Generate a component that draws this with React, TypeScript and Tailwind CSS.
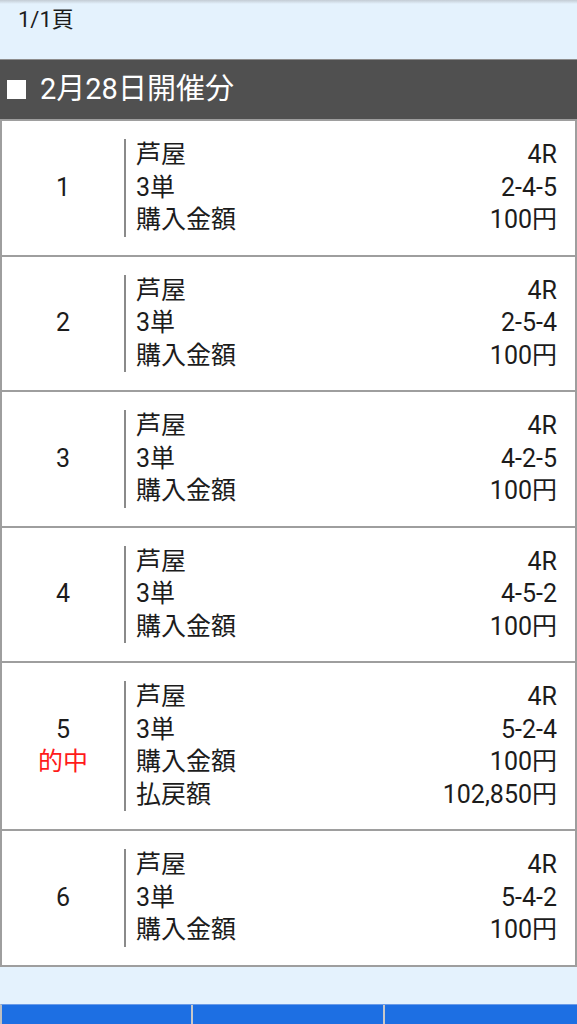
import React from "react";

type Bet = {
  no: number;
  place: string;
  race: string;
  kind: string;
  combo: string;
  amount: string;
  hit?: boolean;
  payout?: string;
};

const bets: Bet[] = [
  { no: 1, place: "芦屋", race: "4R", kind: "3単", combo: "2-4-5", amount: "100円" },
  { no: 2, place: "芦屋", race: "4R", kind: "3単", combo: "2-5-4", amount: "100円" },
  { no: 3, place: "芦屋", race: "4R", kind: "3単", combo: "4-2-5", amount: "100円" },
  { no: 4, place: "芦屋", race: "4R", kind: "3単", combo: "4-5-2", amount: "100円" },
  { no: 5, place: "芦屋", race: "4R", kind: "3単", combo: "5-2-4", amount: "100円", hit: true, payout: "102,850円" },
  { no: 6, place: "芦屋", race: "4R", kind: "3単", combo: "5-4-2", amount: "100円" },
];

function Row({ label, value }: { label: string; value: string }) {
  return (
    <div className="flex justify-between">
      <span>{label}</span>
      <span>{value}</span>
    </div>
  );
}

function BetCard({ bet }: { bet: Bet }) {
  return (
    <div className="flex items-stretch bg-white border-x-2 border-b-2 border-[#9e9e9e] py-[18px]">
      <div className="w-[122px] flex flex-col items-center justify-center leading-[32.5px]">
        <span>{bet.no}</span>
        {bet.hit && <span className="text-[#ff1a1a]">的中</span>}
      </div>
      <div className="flex-1 border-l-2 border-[#8a8a8a] pl-[10px] pr-[18px] leading-[32.5px]">
        <Row label={bet.place} value={bet.race} />
        <Row label={bet.kind} value={bet.combo} />
        <Row label="購入金額" value={bet.amount} />
        {bet.payout && <Row label="払戻額" value={bet.payout} />}
      </div>
    </div>
  );
}

export default function App() {
  return (
    <div
      className="h-[1024px] w-[577px] overflow-hidden bg-[#e4f2fd] text-[#1c1c1c]"
      style={{ fontFamily: "Roboto, 'Noto Sans CJK JP', sans-serif" }}
    >
      <div className="relative h-[59px] pl-[18px] pt-[6px] text-[22px] leading-[28px]">
        <div className="absolute inset-x-0 top-0 h-[4px] bg-gradient-to-b from-[#c3ccd4] to-transparent" />
        1/1頁
      </div>
      <div className="h-[62px] border-t border-[#8d8d8d] border-b-2 border-b-[#9e9e9e] bg-[#505050] flex items-center pl-[7px] text-white text-[29px]">
        <span className="w-[19px] h-[19px] bg-white mr-[14px]" />
        <span>2月28日開催分</span>
      </div>
      <div className="text-[25px]">
        {bets.map((b) => (
          <BetCard key={b.no} bet={b} />
        ))}
      </div>
      <div className="h-[37px]" />
      <div className="flex h-[60px] border-t border-[#6a9be8] bg-[#1d6fe3] border-l-2 border-l-[#bfbfbf]">
        <div className="w-[191px] border-r-2 border-[#c8c8c8]" />
        <div className="w-[192px] border-r-2 border-[#c8c8c8]" />
        <div className="flex-1" />
      </div>
    </div>
  );
}
